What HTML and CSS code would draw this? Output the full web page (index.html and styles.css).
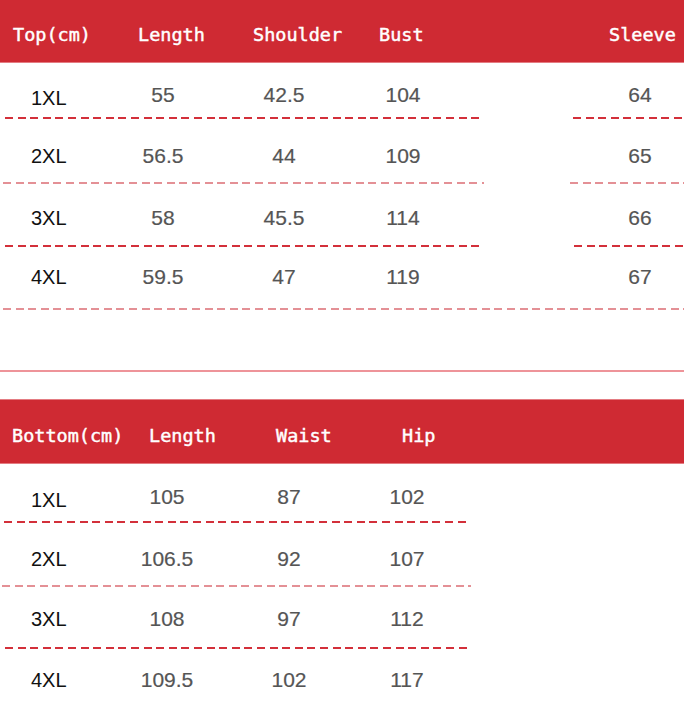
FILE: index.html
```html
<!DOCTYPE html>
<html>
<head>
<meta charset="utf-8">
<link rel="stylesheet" href="styles.css">
</head>
<body>
<div class="page">
  <section class="table top">
    <div class="head head-top">
      <span class="h-top-size">Top(cm)</span>
      <span class="h-top-len">Length</span>
      <span class="h-top-sh">Shoulder</span>
      <span class="h-top-bust">Bust</span>
      <span>Sleeve</span>
    </div>
    <div class="row top-row r1"><span class="size lo">1XL</span><span class="v">55</span><span class="v">42.5</span><span class="v">104</span><span></span><span class="v">64</span></div>
    <div class="line"><i class="dash dark seg-a1"></i><i class="dash dark seg-b1"></i></div>
    <div class="row top-row r2"><span class="size">2XL</span><span class="v">56.5</span><span class="v">44</span><span class="v">109</span><span></span><span class="v">65</span></div>
    <div class="line"><i class="dash light seg-a2"></i><i class="dash light seg-b2"></i></div>
    <div class="row top-row r3"><span class="size">3XL</span><span class="v">58</span><span class="v">45.5</span><span class="v">114</span><span></span><span class="v">66</span></div>
    <div class="line"><i class="dash dark seg-a3"></i><i class="dash dark seg-b3"></i></div>
    <div class="row top-row r4"><span class="size">4XL</span><span class="v">59.5</span><span class="v">47</span><span class="v">119</span><span></span><span class="v">67</span></div>
    <div class="line"><i class="dash light seg-full"></i></div>
  </section>

  <div class="separator"></div>

  <section class="table bottom">
    <div class="head head-bottom">
      <span class="h-b-size">Bottom(cm)</span>
      <span class="h-b-len">Length</span>
      <span class="h-b-waist">Waist</span>
      <span>Hip</span>
    </div>
    <div class="row bot-row b1"><span class="size lo">1XL</span><span class="v">105</span><span class="v">87</span><span class="v">102</span></div>
    <div class="line"><i class="dash dark seg-c1"></i></div>
    <div class="row bot-row b2"><span class="size">2XL</span><span class="v">106.5</span><span class="v">92</span><span class="v">107</span></div>
    <div class="line"><i class="dash light seg-c2"></i></div>
    <div class="row bot-row b3"><span class="size">3XL</span><span class="v">108</span><span class="v">97</span><span class="v">112</span></div>
    <div class="line"><i class="dash dark seg-c3"></i></div>
    <div class="row bot-row b4"><span class="size">4XL</span><span class="v">109.5</span><span class="v">102</span><span class="v">117</span></div>
  </section>
</div>
</body>
</html>
```

FILE: styles.css
```css
* { box-sizing: border-box; margin: 0; padding: 0; }
html, body { background: #ffffff; }
body { margin: 0; width: 684px; height: 706px; overflow: hidden; }
.page { width: 684px; }

.head {
  background: #cf2a33;
  color: #ffffff;
  font-family: "DejaVu Sans Mono", "Liberation Mono", monospace;
  font-size: 18.5px;
  -webkit-text-stroke: 0.45px #ffffff;
  display: flex;
  align-items: center;
  border-bottom: 1px solid #e47c82;
  white-space: nowrap;
}
.head-top { height: 63px; padding-left: 13px; padding-top: 6px; }
.h-top-size { width: 125px; }
.h-top-len { width: 115px; }
.h-top-sh { width: 126px; }
.h-top-bust { width: 230px; }

.head-bottom { height: 65px; padding-left: 12px; padding-top: 7px; margin-top: 27px; border-top: 1px solid #e47c82; }
.h-b-size { width: 137px; }
.h-b-len { width: 127px; }
.h-b-waist { width: 126px; }

.row {
  display: grid;
  align-items: start;
  font-family: "Liberation Sans", Arial, sans-serif;
  font-size: 20px;
  line-height: 24px;
}
.top-row { grid-template-columns: 110px 106px 136px 102px 146px 80px; }
.bot-row { grid-template-columns: 110px 114px 130px 106px; }

.size { color: #111111; padding-left: 31px; }
.size.lo { padding-top: 3px; }
.v { color: #555555; text-align: center; font-size: 21px; -webkit-text-stroke: 0.2px #555555; }

.r1 { height: 54px; padding-top: 20px; }
.r2 { height: 63px; padding-top: 25px; }
.r3 { height: 61px; padding-top: 22px; }
.r4 { height: 61px; padding-top: 18px; }

.b1 { height: 57px; padding-top: 21px; }
.b2 { height: 62px; padding-top: 24px; }
.b3 { height: 60px; padding-top: 20px; }
.b4 { height: 57px; padding-top: 19px; }

.line { display: flex; height: 2px; }
.dash { display: block; height: 2px; }
.dash.dark { background: repeating-linear-gradient(to right, #d3303a 0 8px, transparent 8px 12.6px); }
.dash.light { background: repeating-linear-gradient(to right, #df7d83 0 8px, transparent 8px 12.6px); opacity: 0.85; }

.seg-a1 { margin-left: 5px; width: 476px; }
.seg-b1 { margin-left: 92px; width: 111px; }
.seg-a2 { margin-left: 3px; width: 481px; }
.seg-b2 { margin-left: 86px; width: 114px; }
.seg-a3 { margin-left: 5px; width: 475px; }
.seg-b3 { margin-left: 94px; width: 110px; }
.seg-full { margin-left: 3px; width: 681px; }
.seg-c1 { margin-left: 4px; width: 465px; }
.seg-c2 { margin-left: 2px; width: 469px; }
.seg-c3 { margin-left: 5px; width: 464px; }

.separator { height: 2px; margin-top: 60px; background: #ee9499; }
```
